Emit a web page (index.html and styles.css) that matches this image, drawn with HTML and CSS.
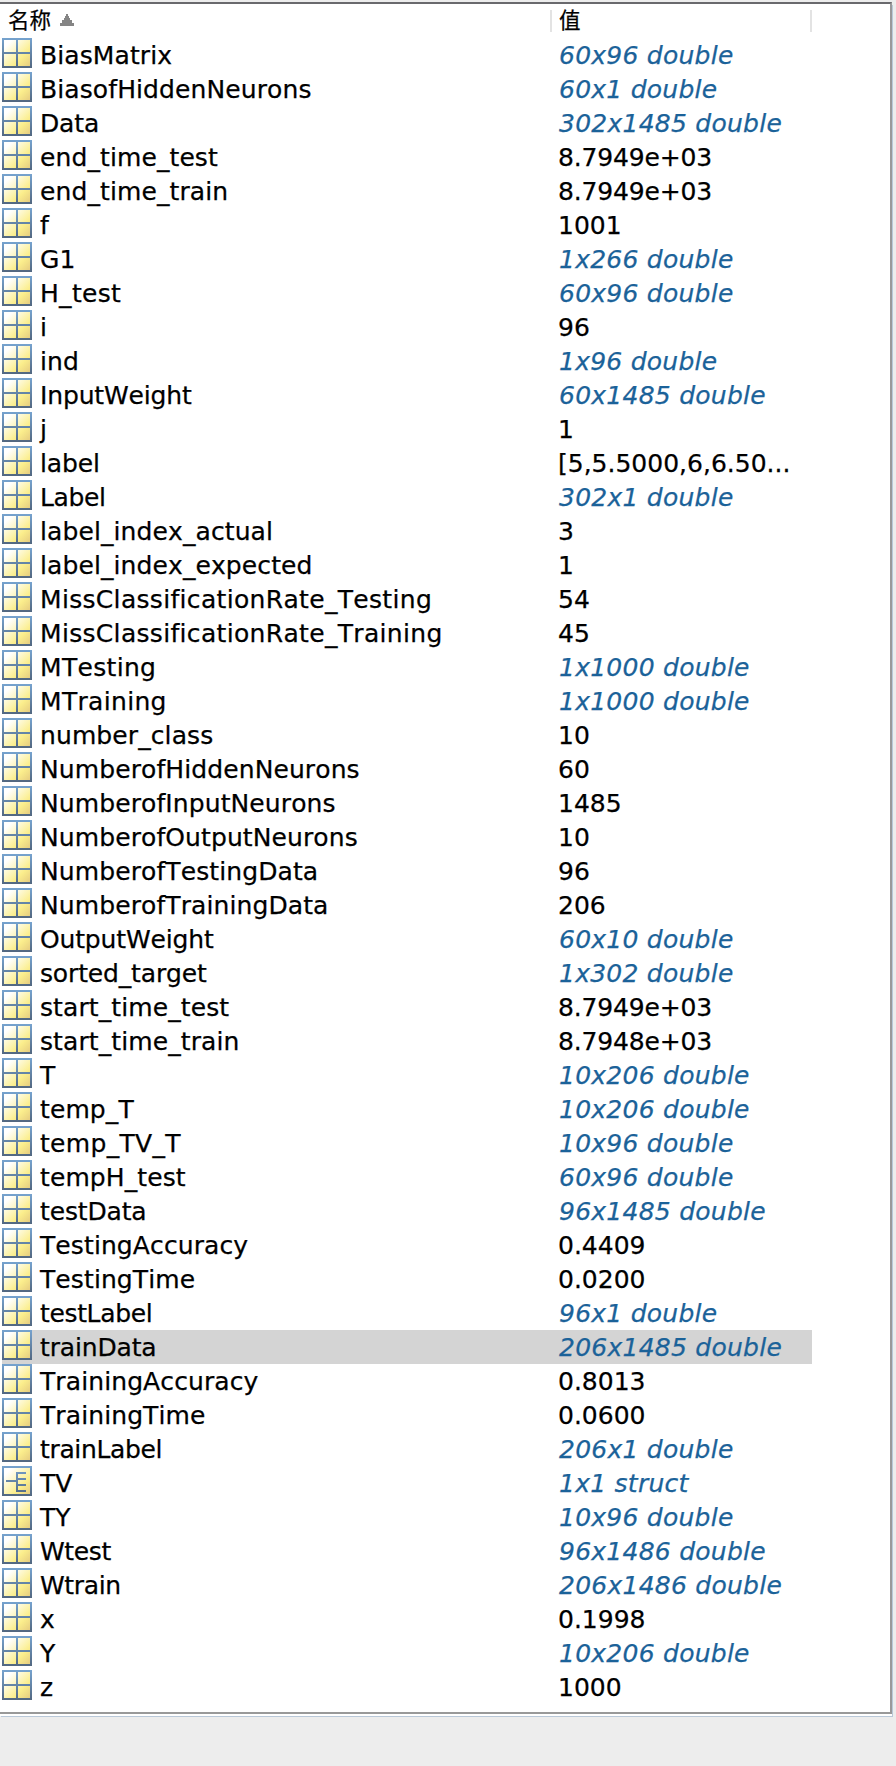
FILE: index.html
```html
<!DOCTYPE html>
<html lang="zh-CN">
<head>
<meta charset="utf-8">
<title>工作区</title>
<link rel="stylesheet" href="styles.css">
</head>
<body>
<svg class="defs" aria-hidden="true">
  <defs>
    <linearGradient id="fill" x1="2" y1="2" x2="28" y2="28" gradientUnits="userSpaceOnUse">
      <stop offset="0.15" stop-color="#ffffff"/><stop offset="0.68" stop-color="#fbee8c"/><stop offset="1" stop-color="#e6cd80"/>
    </linearGradient>
    <linearGradient id="edge" x1="0" y1="0" x2="0" y2="30" gradientUnits="userSpaceOnUse">
      <stop offset="0" stop-color="#76a3cf"/><stop offset="1" stop-color="#526780"/>
    </linearGradient>
    <symbol id="matrix" viewBox="0 0 30 30">
      <path fill="url(#edge)" d="M0 0h30v30H0z"/>
      <path fill="url(#fill)" d="M2 2h12v12H2zM16 2h12v12H16zM2 16h12v12H2zM16 16h12v12H16z"/>
    </symbol>
    <symbol id="struct" viewBox="0 0 30 30">
      <path fill="url(#edge)" d="M0 0h30v30H0z"/>
      <path fill="url(#fill)" d="M2 2h26v26H2z"/>
      <path fill="url(#edge)" d="M4 14h10V6h10v2h-8v4h8v2h-8v4h8v2h-8v4h8v2H14V16H4z"/>
    </symbol>
  </defs>
</svg>
<main class="workspace">
  <header class="head">
    <div class="head-name">名称<svg class="sort" viewBox="0 0 14 12"><path d="M6 0h2v2h1v2h1v2h2v3h2v3H0V9h2V6h2V4h1V2h1z"/></svg></div>
    <div class="head-value">值</div>
  </header>
  <div class="rows">
    <div class="row"><svg class="icon"><use href="#matrix"/></svg><span class="name">BiasMatrix</span><span class="value dim">60x96 double</span></div>
    <div class="row"><svg class="icon"><use href="#matrix"/></svg><span class="name">BiasofHiddenNeurons</span><span class="value dim">60x1 double</span></div>
    <div class="row"><svg class="icon"><use href="#matrix"/></svg><span class="name tight">Data</span><span class="value dim">302x1485 double</span></div>
    <div class="row"><svg class="icon"><use href="#matrix"/></svg><span class="name">end_time_test</span><span class="value exp">8.7949e+03</span></div>
    <div class="row"><svg class="icon"><use href="#matrix"/></svg><span class="name">end_time_train</span><span class="value exp">8.7949e+03</span></div>
    <div class="row"><svg class="icon"><use href="#matrix"/></svg><span class="name">f</span><span class="value">1001</span></div>
    <div class="row"><svg class="icon"><use href="#matrix"/></svg><span class="name">G1</span><span class="value dim">1x266 double</span></div>
    <div class="row"><svg class="icon"><use href="#matrix"/></svg><span class="name loose">H_test</span><span class="value dim">60x96 double</span></div>
    <div class="row"><svg class="icon"><use href="#matrix"/></svg><span class="name">i</span><span class="value">96</span></div>
    <div class="row"><svg class="icon"><use href="#matrix"/></svg><span class="name">ind</span><span class="value dim">1x96 double</span></div>
    <div class="row"><svg class="icon"><use href="#matrix"/></svg><span class="name tight">InputWeight</span><span class="value dim">60x1485 double</span></div>
    <div class="row"><svg class="icon"><use href="#matrix"/></svg><span class="name">j</span><span class="value">1</span></div>
    <div class="row"><svg class="icon"><use href="#matrix"/></svg><span class="name tight">label</span><span class="value">[5,5.5000,6,6.50...</span></div>
    <div class="row"><svg class="icon"><use href="#matrix"/></svg><span class="name tighter">Label</span><span class="value dim">302x1 double</span></div>
    <div class="row"><svg class="icon"><use href="#matrix"/></svg><span class="name">label_index_actual</span><span class="value">3</span></div>
    <div class="row"><svg class="icon"><use href="#matrix"/></svg><span class="name">label_index_expected</span><span class="value">1</span></div>
    <div class="row"><svg class="icon"><use href="#matrix"/></svg><span class="name loose">MissClassificationRate_Testing</span><span class="value">54</span></div>
    <div class="row"><svg class="icon"><use href="#matrix"/></svg><span class="name loose">MissClassificationRate_Training</span><span class="value">45</span></div>
    <div class="row"><svg class="icon"><use href="#matrix"/></svg><span class="name loose">MTesting</span><span class="value dim">1x1000 double</span></div>
    <div class="row"><svg class="icon"><use href="#matrix"/></svg><span class="name loose">MTraining</span><span class="value dim">1x1000 double</span></div>
    <div class="row"><svg class="icon"><use href="#matrix"/></svg><span class="name">number_class</span><span class="value">10</span></div>
    <div class="row"><svg class="icon"><use href="#matrix"/></svg><span class="name">NumberofHiddenNeurons</span><span class="value">60</span></div>
    <div class="row"><svg class="icon"><use href="#matrix"/></svg><span class="name">NumberofInputNeurons</span><span class="value">1485</span></div>
    <div class="row"><svg class="icon"><use href="#matrix"/></svg><span class="name">NumberofOutputNeurons</span><span class="value">10</span></div>
    <div class="row"><svg class="icon"><use href="#matrix"/></svg><span class="name">NumberofTestingData</span><span class="value">96</span></div>
    <div class="row"><svg class="icon"><use href="#matrix"/></svg><span class="name">NumberofTrainingData</span><span class="value">206</span></div>
    <div class="row"><svg class="icon"><use href="#matrix"/></svg><span class="name tight">OutputWeight</span><span class="value dim">60x10 double</span></div>
    <div class="row"><svg class="icon"><use href="#matrix"/></svg><span class="name tight">sorted_target</span><span class="value dim">1x302 double</span></div>
    <div class="row"><svg class="icon"><use href="#matrix"/></svg><span class="name">start_time_test</span><span class="value exp">8.7949e+03</span></div>
    <div class="row"><svg class="icon"><use href="#matrix"/></svg><span class="name">start_time_train</span><span class="value exp">8.7948e+03</span></div>
    <div class="row"><svg class="icon"><use href="#matrix"/></svg><span class="name">T</span><span class="value dim">10x206 double</span></div>
    <div class="row"><svg class="icon"><use href="#matrix"/></svg><span class="name">temp_T</span><span class="value dim">10x206 double</span></div>
    <div class="row"><svg class="icon"><use href="#matrix"/></svg><span class="name loose">temp_TV_T</span><span class="value dim">10x96 double</span></div>
    <div class="row"><svg class="icon"><use href="#matrix"/></svg><span class="name">tempH_test</span><span class="value dim">60x96 double</span></div>
    <div class="row"><svg class="icon"><use href="#matrix"/></svg><span class="name tight">testData</span><span class="value dim">96x1485 double</span></div>
    <div class="row"><svg class="icon"><use href="#matrix"/></svg><span class="name">TestingAccuracy</span><span class="value">0.4409</span></div>
    <div class="row"><svg class="icon"><use href="#matrix"/></svg><span class="name">TestingTime</span><span class="value">0.0200</span></div>
    <div class="row"><svg class="icon"><use href="#matrix"/></svg><span class="name tighter">testLabel</span><span class="value dim">96x1 double</span></div>
    <div class="row selected"><svg class="icon"><use href="#matrix"/></svg><span class="name tight">trainData</span><span class="value dim">206x1485 double</span></div>
    <div class="row"><svg class="icon"><use href="#matrix"/></svg><span class="name">TrainingAccuracy</span><span class="value">0.8013</span></div>
    <div class="row"><svg class="icon"><use href="#matrix"/></svg><span class="name">TrainingTime</span><span class="value">0.0600</span></div>
    <div class="row"><svg class="icon"><use href="#matrix"/></svg><span class="name tighter">trainLabel</span><span class="value dim">206x1 double</span></div>
    <div class="row"><svg class="icon"><use href="#struct"/></svg><span class="name">TV</span><span class="value dim">1x1 struct</span></div>
    <div class="row"><svg class="icon"><use href="#matrix"/></svg><span class="name">TY</span><span class="value dim">10x96 double</span></div>
    <div class="row"><svg class="icon"><use href="#matrix"/></svg><span class="name tighter">Wtest</span><span class="value dim">96x1486 double</span></div>
    <div class="row"><svg class="icon"><use href="#matrix"/></svg><span class="name tighter">Wtrain</span><span class="value dim">206x1486 double</span></div>
    <div class="row"><svg class="icon"><use href="#matrix"/></svg><span class="name">x</span><span class="value">0.1998</span></div>
    <div class="row"><svg class="icon"><use href="#matrix"/></svg><span class="name">Y</span><span class="value dim">10x206 double</span></div>
    <div class="row"><svg class="icon"><use href="#matrix"/></svg><span class="name">z</span><span class="value">1000</span></div>
  </div>
</main>
</body>
</html>
```
FILE: styles.css
```css
* { box-sizing: border-box; }
body {
  margin: 0;
  height: 1766px;
  background: #ededed;
  color: #000;
  font-family: "Lucida Grande", "DejaVu Sans", "Noto Sans CJK SC", sans-serif;
  font-size: 25px;
  font-kerning: none;
  font-variant-ligatures: none;
  -webkit-text-stroke: 0.25px currentColor;
}
.defs { display: block; width: 0; height: 0; }
.workspace {
  width: 892px;
  height: 1712px;
  margin-top: 2px;
  background: #fff;
  border-top: 2px solid #69696d;
  border-right: 2px solid #99999b;
  border-bottom: 2px solid #999;
  box-shadow: 0 2px 0 #fff, 1px 3px 0 #b9c8d8;
}
.head {
  display: flex;
  height: 34px;
  font-family: "Noto Sans CJK SC", sans-serif;
  font-size: 21.5px;
  line-height: 30px;
}
.head-name { width: 550px; padding-left: 8px; display: flex; }
.sort { width: 14px; height: 12px; margin: 10px 0 0 9px; fill: #858585; }
.head-value {
  width: 262px;
  height: 22px;
  margin-top: 6px;
  padding-left: 7px;
  line-height: 18px;
  border-left: 2px solid #e3e3e3;
  border-right: 2px solid #e3e3e3;
}
.row {
  display: flex;
  width: 810px;
  height: 34px;
  margin-left: 2px;
  line-height: 35px;
  white-space: nowrap;
}
.icon { width: 30px; height: 30px; flex: none; }
.name { width: 518px; margin-left: 8px; letter-spacing: 0.1px; }
.loose { letter-spacing: 0.32px; }
.tight { letter-spacing: -0.15px; }
.tighter { letter-spacing: -0.35px; }
.exp { letter-spacing: -0.15px; }
.dim {
  margin-left: 1px;
  color: #1b6299;
  font-style: italic;
  letter-spacing: 0.25px;
}
.selected { background: #d4d4d4; }
```
